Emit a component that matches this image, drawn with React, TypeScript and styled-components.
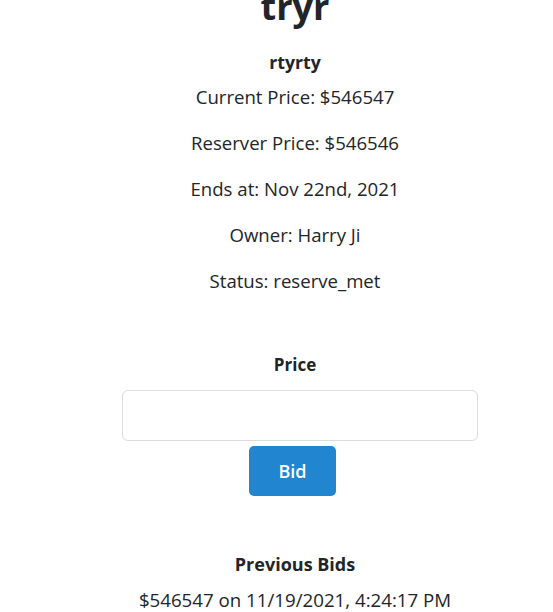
import React from "react";
import styled, { createGlobalStyle } from "styled-components";

const Global = createGlobalStyle`
  html, body { margin: 0; padding: 0; background: #fff; overflow: hidden; }
  body { font-family: "Open Sans", "Noto Sans", sans-serif; color: #212529; }
`;

const Page = styled.div`
  display: flex;
  flex-direction: column;
  align-items: center;
  padding-left: 37px;
  text-align: center;
`;

const Title = styled.h1`
  margin: -13px 0 0;
  font-size: 36px;
  line-height: 40px;
  font-weight: 700;
`;

const Subtitle = styled.h3`
  margin: 23px 0 11px;
  font-size: 17.7px;
  line-height: 24px;
  font-weight: 700;
`;

const Info = styled.p`
  margin: 0 0 22px;
  font-size: 18.6px;
  line-height: 24px;
`;

const Form = styled.form`
  display: flex;
  flex-direction: column;
  align-items: center;
  margin-top: 38px;
`;

const Label = styled.label`
  font-size: 17px;
  line-height: 24px;
  font-weight: 700;
  margin-bottom: 13px;
`;

const Input = styled.input`
  box-sizing: border-box;
  width: 356px;
  height: 51px;
  margin-left: 10px;
  border: 1px solid #dcdcdc;
  border-radius: 6px;
  outline: none;
  padding: 0 12px;
  font: inherit;
`;

const Button = styled.button`
  box-sizing: border-box;
  margin-top: 5px;
  margin-right: 5px;
  width: 87px;
  height: 50px;
  border: none;
  border-radius: 5px;
  background: #2185d0;
  color: #fff;
  font-family: inherit;
  font-size: 18px;
  font-weight: 600;
`;

const Section = styled.h4`
  margin: 56px 0 12px;
  font-size: 18px;
  line-height: 24px;
  font-weight: 700;
`;

const BidLine = styled.div`
  font-size: 18.7px;
  line-height: 24px;
`;

export default function App() {
  return (
    <>
      <Global />
      <Page>
        <Title>tryr</Title>
        <Subtitle>rtyrty</Subtitle>
        <Info>Current Price: $546547</Info>
        <Info>Reserver Price: $546546</Info>
        <Info>Ends at: Nov 22nd, 2021</Info>
        <Info>Owner: Harry Ji</Info>
        <Info>Status: reserve_met</Info>
        <Form onSubmit={(e) => e.preventDefault()}>
          <Label htmlFor="price">Price</Label>
          <Input id="price" type="text" />
          <Button type="submit">Bid</Button>
        </Form>
        <Section>Previous Bids</Section>
        <BidLine>$546547 on 11/19/2021, 4:24:17 PM</BidLine>
      </Page>
    </>
  );
}
